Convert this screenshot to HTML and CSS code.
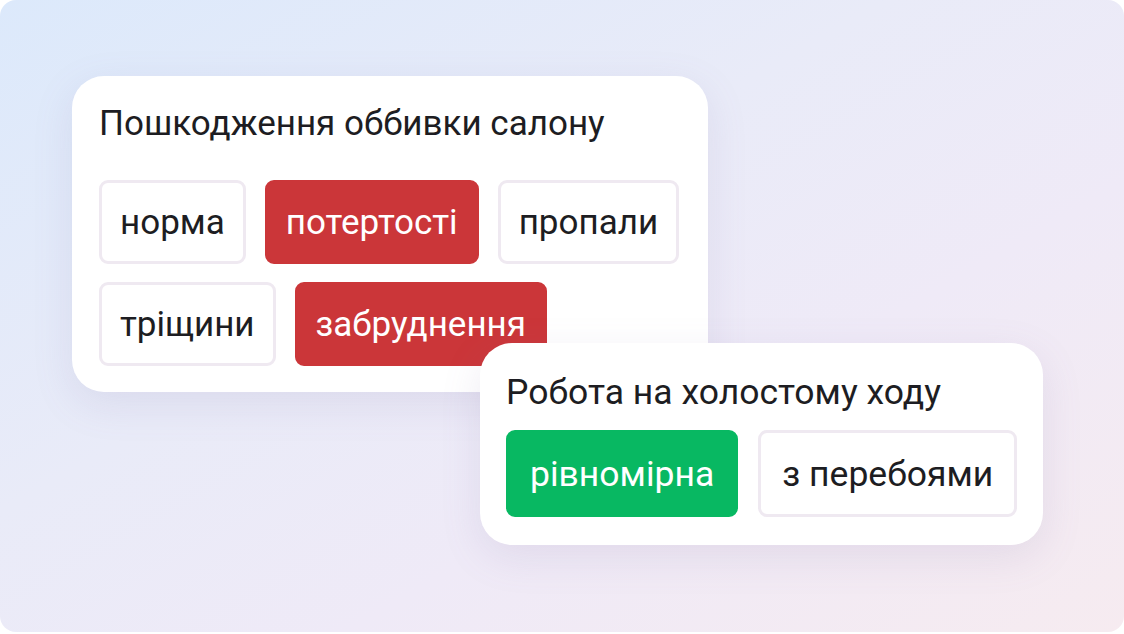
FILE: index.html
```html
<!DOCTYPE html>
<html lang="uk">
<head>
<meta charset="utf-8">
<title>Стан авто</title>
<link rel="stylesheet" href="styles.css">
</head>
<body>
<div class="frame">
  <section class="card card-main">
    <h2 class="card-title">Пошкодження оббивки салону</h2>
    <div class="chips">
      <div class="chip-row">
        <span class="chip">норма</span>
        <span class="chip chip-red">потертості</span>
        <span class="chip">пропали</span>
      </div>
      <div class="chip-row">
        <span class="chip">тріщини</span>
        <span class="chip chip-red">забруднення</span>
      </div>
    </div>
  </section>
  <section class="card card-float">
    <h2 class="card-title">Робота на холостому ходу</h2>
    <div class="chips">
      <div class="chip-row">
        <span class="chip chip-green">рівномірна</span>
        <span class="chip">з перебоями</span>
      </div>
    </div>
  </section>
</div>
</body>
</html>
```
FILE: styles.css
```css
html, body {
  margin: 0;
  padding: 0;
  background: #ffffff;
}
body {
  width: 1124px;
  height: 634px;
  overflow: hidden;
  font-family: Roboto, "Noto Sans", sans-serif;
}
.frame {
  position: relative;
  width: 1124px;
  height: 632px;
  border-radius: 16px;
  background: linear-gradient(150deg, #dce9fb 0%, #e9ebf8 40%, #efeaf7 65%, #f6ebf0 100%);
  overflow: hidden;
  padding: 76px 0 0 72px;
  box-sizing: border-box;
}
.card {
  background: #ffffff;
  border-radius: 32px;
  box-shadow: 0 12px 40px rgba(120, 110, 160, 0.13);
  box-sizing: border-box;
}
.card-main {
  width: 636px;
  height: 316px;
  padding: 25px 27px 0 27px;
}
.card-float {
  position: absolute;
  left: 480px;
  top: 343px;
  width: 563px;
  height: 202px;
  padding: 26px 26px 0 26px;
}
.card-title {
  margin: 0;
  font-weight: 400;
  font-size: 35px;
  line-height: 46px;
  color: #1d1d22;
  white-space: nowrap;
}
.card-main .card-title {
  margin-bottom: 33px;
}
.card-float .card-title {
  font-size: 35.5px;
  margin-bottom: 15px;
}
.chips {
  display: flex;
  flex-direction: column;
  gap: 18px;
}
.chip-row {
  display: flex;
  gap: 19px;
}
.chip {
  display: inline-flex;
  align-items: center;
  justify-content: center;
  box-sizing: border-box;
  flex: none;
  height: 84px;
  padding: 0 18px;
  border: 3px solid #efe9f1;
  border-radius: 9px;
  background: #ffffff;
  font-size: 35px;
  color: #1d1d22;
  white-space: nowrap;
}
.card-float .chip-row {
  gap: 20px;
}
.card-float .chip {
  height: 87px;
  padding: 0 21px;
  font-size: 35.5px;
}
.chip-red {
  background: #cb3639;
  border-color: #cb3639;
  color: #ffffff;
}
.chip-green {
  background: #08b862;
  border-color: #08b862;
  color: #ffffff;
}
```
